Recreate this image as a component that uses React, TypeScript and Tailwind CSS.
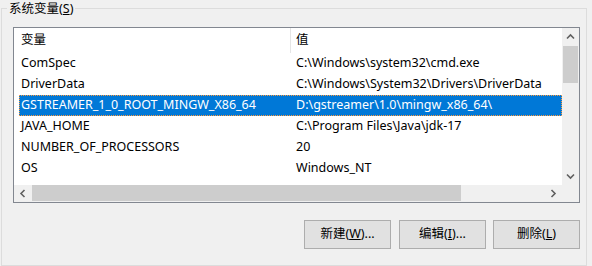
import React from "react";

const rows: [string, string][] = [
  ["ComSpec", "C:\\Windows\\system32\\cmd.exe"],
  ["DriverData", "C:\\Windows\\System32\\Drivers\\DriverData"],
  ["GSTREAMER_1_0_ROOT_MINGW_X86_64", "D:\\gstreamer\\1.0\\mingw_x86_64\\"],
  ["JAVA_HOME", "C:\\Program Files\\Java\\jdk-17"],
  ["NUMBER_OF_PROCESSORS", "20"],
  ["OS", "Windows_NT"],
];

const FONT = { fontFamily: '"Noto Sans", "Noto Sans CJK SC", sans-serif' };

function Chevron({ dir }: { dir: "up" | "down" | "left" | "right" }) {
  const rot = { up: 0, right: 90, down: 180, left: 270 }[dir];
  return (
    <svg width="9" height="9" viewBox="0 0 9 9" style={{ transform: `rotate(${rot}deg)` }}>
      <path d="M1 6.5 L4.5 3 L8 6.5" fill="none" stroke="#606060" strokeWidth="1.6" />
    </svg>
  );
}

function Btn({ children }: { children: React.ReactNode }) {
  return (
    <button className="w-[87px] h-[29px] border border-[#adadad] bg-[#e1e1e1] text-[12.5px] text-black flex items-center justify-center leading-none">
      {children}
    </button>
  );
}

export default function App() {
  return (
    <div className="w-[592px] h-[266px] bg-[#f0f0f0] overflow-hidden text-black" style={FONT}>
      <fieldset className="ml-[1px] w-[586px] h-[266px] border border-[#dcdcdc] flex flex-col">
        <legend className="ml-[5px] px-[2px] text-[12.5px] leading-[17px]">
          系统变量(<span className="underline">S</span>)
        </legend>
        <div className="mt-[10px] ml-[11px] w-[567px] h-[176px] border border-[#828790] bg-white grid grid-cols-[548px_17px] grid-rows-[157px_17px]">
          {/* content */}
          <div className="flex flex-col overflow-hidden text-[12.5px]">
            <div className="h-[25px] shrink-0 flex items-center">
              <div className="w-[277px] h-full flex items-center pl-[7px] border-r border-[#e5e5e5]">变量</div>
              <div className="pl-[5px]">值</div>
            </div>
            {rows.map(([k, v], i) => {
              const sel = i === 2;
              return (
                <div
                  key={k}
                  className={
                    sel
                      ? "ml-[5px] h-[21px] shrink-0 grid grid-cols-[277px_1fr] items-center bg-[#0078d7] text-white border border-dotted border-[#ff9a3c]"
                      : "ml-[5px] h-[21px] shrink-0 grid grid-cols-[277px_1fr] items-center border border-transparent"
                  }
                >
                  <div className="pl-[1px] whitespace-nowrap">{k}</div>
                  <div className="-ml-[1px] whitespace-nowrap">{v}</div>
                </div>
              );
            })}
          </div>
          {/* vertical scrollbar */}
          <div className="bg-[#f0f0f0] flex flex-col">
            <div className="h-[17px] flex items-center justify-center">
              <Chevron dir="up" />
            </div>
            <div className="mt-[1px] mx-[1px] h-[37px] bg-[#cdcdcd]" />
            <div className="flex-1" />
            <div className="h-[17px] flex items-center justify-center">
              <Chevron dir="down" />
            </div>
          </div>
          {/* horizontal scrollbar */}
          <div className="bg-[#f0f0f0] flex">
            <div className="w-[17px] flex items-center justify-center">
              <Chevron dir="left" />
            </div>
            <div className="ml-[1px] w-[429px] h-[16px] bg-[#cdcdcd]" />
            <div className="flex-1" />
            <div className="w-[17px] flex items-center justify-center">
              <Chevron dir="right" />
            </div>
          </div>
          <div className="bg-[#f0f0f0]" />
        </div>
        <div className="mt-[17px] ml-[302px] flex">
          <Btn>
            新建(<span className="underline">W</span>)...
          </Btn>
          <div className="w-[8px]" />
          <Btn>
            编辑(<span className="underline">I</span>)...
          </Btn>
          <div className="w-[7px]" />
          <Btn>
            删除(<span className="underline">L</span>)
          </Btn>
        </div>
      </fieldset>
    </div>
  );
}
